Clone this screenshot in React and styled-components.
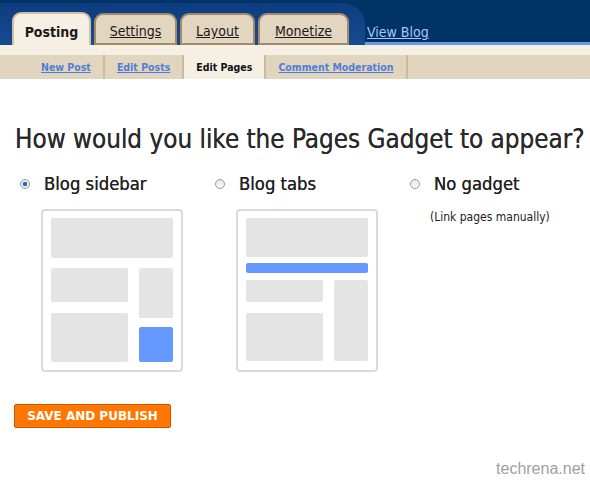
import React from 'react'
import styled, { createGlobalStyle } from 'styled-components'

const Global = createGlobalStyle`
  html, body { margin: 0; padding: 0; background: #fff; }
  body { width: 590px; height: 480px; overflow: hidden; font-family: "DejaVu Sans Condensed", "DejaVu Sans", sans-serif; }
`

const Page = styled.div`
  width: 590px;
  height: 480px;
  display: flex;
  flex-direction: column;
  position: relative;
`

const Header = styled.div`
  height: 45px;
  background: #003366;
  display: flex;
  align-items: flex-end;
  border-bottom: 3px solid #6c9ce6;
  box-sizing: border-box;
`

const TabStrip = styled.div`
  display: flex;
  align-items: flex-end;
  gap: 3px;
  padding: 0 16px 0 12px;
  height: 42px;
  background: linear-gradient(180deg, #0d3d80 0%, #184a90 100%);
  border-top-right-radius: 22px;
  margin-bottom: -3px;
`

const Tab = styled.div`
  width: ${p => p.$w}px;
  height: ${p => (p.$active ? '34px' : '32px')};
  margin-bottom: ${p => (p.$active ? '-1px' : '0')};
  padding-top: 4px;
  box-sizing: border-box;
  display: flex;
  align-items: center;
  justify-content: center;
  border: 2px solid ${p => (p.$active ? '#cdbfa6' : '#a18b69')};
  border-bottom: ${p => (p.$active ? 'none' : '2px solid #a18b69')};
  border-radius: 9px 9px 0 0;
  background: ${p => (p.$active ? '#f6efe4' : '#e3d6c1')};
  font-size: 14px;
  font-weight: ${p => (p.$active ? 'bold' : 'normal')};
  color: #1a1a1a;
  text-decoration: ${p => (p.$active ? 'none' : 'underline')};
`

const ViewBlog = styled.a`
  margin-left: 2px;
  margin-bottom: 2px;
  font-size: 14px;
  color: #a7c6f4;
  text-decoration: underline;
`

const CreamStrip = styled.div`
  height: 10px;
  background: #f6efe4;
`

const SubNav = styled.div`
  height: 24px;
  background: #e2d5c0;
  display: flex;
  align-items: stretch;
  padding-left: 29px;
`

const SubItem = styled.div`
  display: flex;
  align-items: center;
  padding: 0 12px;
  border-right: 2px solid #cbbb9f;
  background: ${p => (p.$active ? '#f6efe4' : 'transparent')};
  font-size: 10.5px;
  font-weight: bold;
  color: ${p => (p.$active ? '#111' : '#4f7fd6')};
  text-decoration: ${p => (p.$active ? 'none' : 'underline')};
`

const Content = styled.div`
  padding: 45px 0 0 15px;
`

const Heading = styled.h1`
  margin: 0;
  font-size: 25.8px;
  font-weight: normal;
  color: #2a2a2a;
  white-space: nowrap;
  text-shadow: 0 0 0.4px #2a2a2a;
`

const Options = styled.div`
  display: flex;
  margin-top: 19px;
`

const Option = styled.div`
  width: ${p => p.$w}px;
  display: flex;
  flex-direction: column;
`

const Label = styled.div`
  display: flex;
  align-items: center;
  gap: 14px;
  padding-left: 5px;
  font-size: 18.3px;
  color: #222;
  text-shadow: 0 0 0.4px #222;
`

const Radio = styled.span`
  width: 8px;
  height: 8px;
  border-radius: 50%;
  border: 1px solid #9a9a9a;
  background: ${p => (p.$on ? 'radial-gradient(circle, #2b6cb8 0 2px, #e8eef6 2.5px)' : 'linear-gradient(#e8e8e8, #fafafa)')};
  flex: none;
`

const Hint = styled.div`
  margin: 16px 0 0 25px;
  font-size: 12px;
  color: #222;
`

const Thumb = styled.div`
  margin: 15px 0 0 26px;
  width: 142px;
  height: 163px;
  box-sizing: border-box;
  border: 2px solid #dadada;
  border-radius: 4px;
  padding: 7px 8px;
  display: grid;
  grid-template-columns: 77px 34px;
  column-gap: 11px;
  grid-template-rows: ${p => p.$rows};
`

const Block = styled.div`
  background: ${p => (p.$blue ? '#6699ff' : '#e4e4e4')};
  border-radius: 2px;
  grid-column: ${p => p.$col};
  grid-row: ${p => p.$row};
`

const SaveButton = styled.button`
  margin: 32px 0 0 -1px;
  width: 157px;
  height: 24px;
  background: #ff7700;
  border: 1px solid #c85500;
  border-radius: 2px;
  color: #fff;
  font-family: "DejaVu Sans", sans-serif;
  font-weight: bold;
  font-size: 12px;
  padding: 0;
`

const Watermark = styled.div`
  position: absolute;
  right: 5px;
  bottom: 2px;
  font-family: "Liberation Sans", Arial, sans-serif;
  font-size: 16px;
  color: #a0a0a0;
`

export default function App() {
  return (
    <Page>
      <Global />
      <Header>
        <TabStrip>
          <Tab $active $w={79}>Posting</Tab>
          <Tab $w={83}>Settings</Tab>
          <Tab $w={75}>Layout</Tab>
          <Tab $w={91}>Monetize</Tab>
        </TabStrip>
        <ViewBlog>View Blog</ViewBlog>
      </Header>
      <CreamStrip />
      <SubNav>
        <SubItem>New Post</SubItem>
        <SubItem>Edit Posts</SubItem>
        <SubItem $active>Edit Pages</SubItem>
        <SubItem>Comment Moderation</SubItem>
      </SubNav>
      <Content>
        <Heading>How would you like the Pages Gadget to appear?</Heading>
        <Options>
          <Option $w={195}>
            <Label><Radio $on />Blog sidebar</Label>
            <Thumb $rows="40px 10px 34px 11px 5px 9px 35px">
              <Block $col="1 / 3" $row="1" />
              <Block $col="1" $row="3" />
              <Block $col="2" $row="3 / 6" />
              <Block $col="1" $row="5 / 8" />
              <Block $blue $col="2" $row="7" />
            </Thumb>
          </Option>
          <Option $w={195}>
            <Label><Radio />Blog tabs</Label>
            <Thumb $rows="39px 6px 10px 7px 22px 11px 48px">
              <Block $col="1 / 3" $row="1" />
              <Block $blue $col="1 / 3" $row="3" />
              <Block $col="1" $row="5" />
              <Block $col="2" $row="5 / 8" />
              <Block $col="1" $row="7" />
            </Thumb>
          </Option>
          <Option $w={170}>
            <Label><Radio />No gadget</Label>
            <Hint>(Link pages manually)</Hint>
          </Option>
        </Options>
        <SaveButton>SAVE AND PUBLISH</SaveButton>
      </Content>
      <Watermark>techrena.net</Watermark>
    </Page>
  )
}
